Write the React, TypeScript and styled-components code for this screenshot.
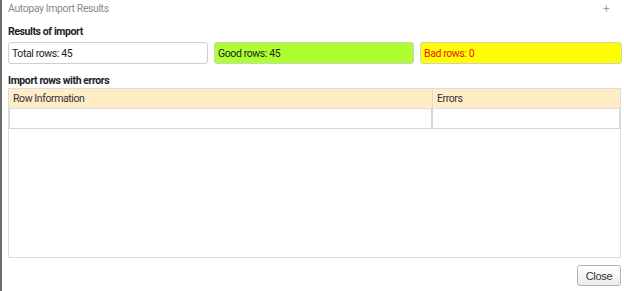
import React from 'react';
import styled, { createGlobalStyle } from 'styled-components';

const GlobalStyle = createGlobalStyle`
  html, body {
    margin: 0;
    padding: 0;
    background: #ffffff;
  }
  body {
    font-family: Roboto, "Liberation Sans", Arial, sans-serif;
    font-size: 10.5px;
    letter-spacing: -0.4px;
    color: #222;
  }
`;

const Window = styled.div`
  width: 624px;
  height: 291px;
  box-sizing: border-box;
  border-left: 2px solid #6e6e6e;
  padding: 0 3px 0 6px;
  display: flex;
  flex-direction: column;
  background: #fff;
`;

const TitleBar = styled.div`
  display: flex;
  align-items: center;
  justify-content: space-between;
  height: 17px;
  color: #8a8a8a;
  padding-right: 12px;
`;

const Plus = styled.span`
  color: #999;
  font-size: 11px;
`;

const SectionTitle = styled.div<{ $top: number }>`
  font-weight: 700;
  color: #222;
  height: 16px;
  display: flex;
  align-items: center;
  margin-top: ${(p) => p.$top}px;
`;

const Summary = styled.div`
  display: grid;
  grid-template-columns: 200px 200px 202px;
  gap: 6px;
  margin-top: 3px;
`;

const StatBox = styled.div<{ $bg: string; $color: string }>`
  height: 22px;
  box-sizing: border-box;
  border: 1px solid #cfcfcf;
  border-radius: 3px;
  background: ${(p) => p.$bg};
  color: ${(p) => p.$color};
  display: flex;
  align-items: center;
  padding-left: 3px;
`;

const TableBox = styled.div`
  height: 170px;
  box-sizing: border-box;
  border: 1px solid #dcdcdc;
  display: flex;
  flex-direction: column;
`;

const Row = styled.div`
  display: grid;
  grid-template-columns: 424px 1fr;
`;

const HeadCell = styled.div`
  height: 20px;
  box-sizing: border-box;
  background: #ffedc7;
  border-right: 1px solid #dcdcdc;
  border-bottom: 1px solid #dcdcdc;
  display: flex;
  align-items: center;
  padding-left: 4px;
  color: #333;
  &:last-child {
    border-right: none;
  }
`;

const Cell = styled.div`
  height: 20px;
  box-sizing: border-box;
  border: 1px solid #d6d6d6;
  border-top: none;
  background: #fff;
  &:first-child {
    border-right-width: 2px;
  }
  &:last-child {
    border-left: none;
  }
`;

const Footer = styled.div`
  display: flex;
  justify-content: flex-end;
  margin-top: 7px;
`;

const CloseButton = styled.button`
  width: 44px;
  height: 21px;
  border: 1px solid #b4b4b4;
  border-radius: 3px;
  background: linear-gradient(#ffffff, #ececec);
  font-family: "Liberation Sans", Arial, sans-serif;
  font-size: 11px;
  color: #333;
  padding: 0;
  letter-spacing: -0.3px;
`;

const App: React.FC = () => {
  return (
    <>
      <GlobalStyle />
      <Window>
        <TitleBar>
          <span>Autopay Import Results</span>
          <Plus>+</Plus>
        </TitleBar>
        <SectionTitle $top={6}>Results of import</SectionTitle>
        <Summary>
          <StatBox $bg="#ffffff" $color="#222">Total rows: 45</StatBox>
          <StatBox $bg="#adff2f" $color="#222">Good rows: 45</StatBox>
          <StatBox $bg="#ffff00" $color="#ee1111">Bad rows: 0</StatBox>
        </Summary>
        <SectionTitle $top={8}>Import rows with errors</SectionTitle>
        <TableBox>
          <Row>
            <HeadCell>Row Information</HeadCell>
            <HeadCell>Errors</HeadCell>
          </Row>
          <Row>
            <Cell />
            <Cell />
          </Row>
        </TableBox>
        <Footer>
          <CloseButton>Close</CloseButton>
        </Footer>
      </Window>
    </>
  );
};

export default App;
